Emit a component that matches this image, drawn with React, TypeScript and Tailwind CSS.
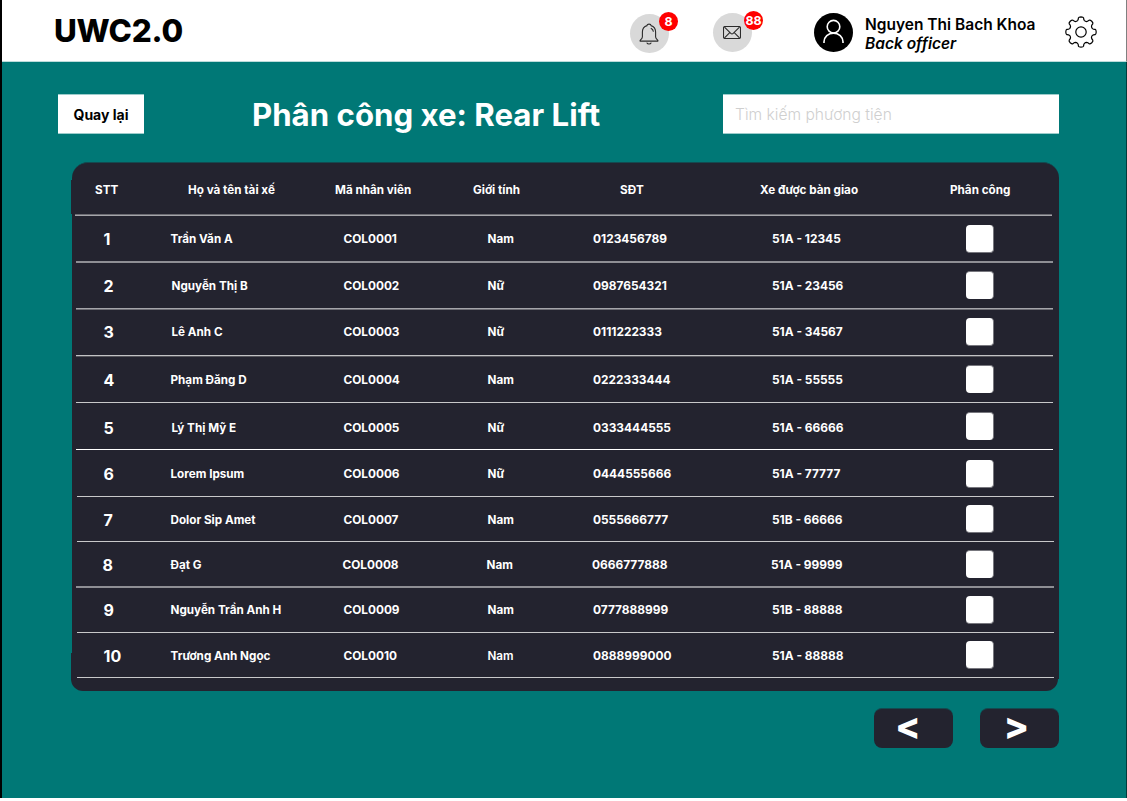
import React from "react";

type Row = {
  no: string; name: string; code: string; gender: string; phone: string; plate: string;
  row: string; line: string;
  text: string; box: string;
  shift?: string; nameShift?: string; genderWeight?: string;
};

const rows: Row[] = [
  { no: "1", name: "Trần Văn A", code: "COL0001", gender: "Nam", phone: "0123456789", plate: "51A - 12345", row: "h-[45px]", line: "mr-[6px] border-t-[#8e8e94] border-b-[#8e8e94]", text: "pt-[14px]", box: "mt-[9px] border-b" },
  { no: "2", name: "Nguyễn Thị B", code: "COL0002", gender: "Nữ", phone: "0987654321", plate: "51A - 23456", row: "h-[45px]", line: "mr-[6px] border-t-[#a5a5aa] border-b-[#6c6c73]", text: "pt-[14px]", box: "mt-[8px] border-t", nameShift: "pl-px" },
  { no: "3", name: "Lê Anh C", code: "COL0003", gender: "Nữ", phone: "0111222333", plate: "51A - 34567", row: "h-[45px]", line: "mr-[6px] border-t-[#c2c2c5] border-b-[#55555c]", text: "pt-[13px]", box: "mt-[8px] border-b", nameShift: "pl-px" },
  { no: "4", name: "Phạm Đăng D", code: "COL0004", gender: "Nam", phone: "0222333444", plate: "51A - 55555", row: "h-[45px]", line: "mr-[6px] border-t-[#c8c8ca] border-b-transparent", text: "pt-[14px]", box: "mt-[8px] border-t" },
  { no: "5", name: "Lý Thị Mỹ E", code: "COL0005", gender: "Nữ", phone: "0333444555", plate: "51A - 66666", row: "h-[45px]", line: "mr-[6px] border-t-white border-b-transparent", text: "pt-[15px]", box: "mt-[8px] border-t", nameShift: "pl-px" },
  { no: "6", name: "Lorem Ipsum", code: "COL0006", gender: "Nữ", phone: "0444555666", plate: "51A - 77777", row: "h-[45px]", line: "ml-px mr-[5px] border-t-[#c8c8ca] border-b-transparent", text: "pt-[14px]", box: "mt-[9px] border-b" },
  { no: "7", name: "Dolor Sip Amet", code: "COL0007", gender: "Nam", phone: "0555666777", plate: "51B - 66666", row: "h-[43px]", line: "ml-px mr-[5px] border-t-[#c8c8ca] border-b-transparent", text: "pt-[13px]", box: "mt-[7px] border-b" },
  { no: "8", name: "Đạt G", code: "COL0008", gender: "Nam", phone: "0666777888", plate: "51A - 99999", row: "h-[43px]", line: "mr-[5px] border-t-[#8e8e94] border-b-[#8e8e94]", text: "pt-[13px]", box: "mt-[7px] border-t", shift: "-ml-px" },
  { no: "9", name: "Nguyễn Trần Anh H", code: "COL0009", gender: "Nam", phone: "0777888999", plate: "51B - 88888", row: "h-[44px]", line: "ml-px mr-[5px] border-t-[#c8c8ca] border-b-transparent", text: "pt-[13px]", box: "mt-[8px] border-b" },
  { no: "10", name: "Trương Anh Ngọc", code: "COL0010", gender: "Nam", phone: "0888999000", plate: "51A - 88888", row: "h-[43px]", line: "ml-px mr-[5px] border-t-[#c8c8ca] border-b-transparent", text: "pt-[13px]", box: "mt-[7px] border-b", genderWeight: "font-semibold" },
];

function Bell() {
  return (
    <svg className="-ml-[1px]" width="20" height="22" viewBox="0 0 20 22" fill="none" stroke="#2b2b2b" strokeWidth="1.100" strokeLinecap="round" strokeLinejoin="round">
      <path d="M8 2.600C8 .6 12 .6 12 2.600c3 .9 4.600 3.200 4.600 6.300v5c0 1.200.5 1.900 2.300 3.400v.8H1.100v-.8c1.800-1.500 2.300-2.200 2.300-3.400v-5C3.400 5.800 5 3.500 8 2.600" />
      <path d="M8 20c.6 1.300 3.400 1.300 4 0M12.200 5.400c1.200.6 1.900 1.500 2.100 2.900" />
    </svg>
  );
}

function Mail() {
  return (
    <svg className="-ml-[1px]" width="18" height="13" viewBox="0 0 18 13" fill="none" stroke="#2b2b2b" strokeWidth="1.100" strokeLinejoin="round">
      <rect x=".5" y=".5" width="17" height="12" rx="1.500" />
      <path d="M1.500 1.200 7.800 7.400c.8.700 1.600.700 2.400 0L16.500 1.200M1.500 11.800l5-5M16.500 11.800l-5-5" />
    </svg>
  );
}

function Gear() {
  const pts: string[] = [];
  const n = 8;
  const polar = (r: number, a: number) => `${(16 + r * Math.cos(a)).toFixed(2)} ${(16 + r * Math.sin(a)).toFixed(2)}`;
  for (let i = 0; i < n; i++) {
    const c = (i * 2 * Math.PI) / n;
    pts.push(`${i ? "L" : "M"}${polar(11.9, c - 0.29)}`);
    pts.push(`Q${polar(12.7, c - 0.2)} ${polar(14.4, c - 0.18)}`);
    pts.push(`Q${polar(15.3, c - 0.15)} ${polar(15.2, c)}`);
    pts.push(`Q${polar(15.3, c + 0.15)} ${polar(14.4, c + 0.18)}`);
    pts.push(`Q${polar(12.7, c + 0.2)} ${polar(11.9, c + 0.29)}`);
    pts.push(`Q${polar(11.4, c + 0.3927)} ${polar(11.9, c + 0.495)}`);
  }
  return (
    <svg width="32" height="32" viewBox="0 0 32 32" fill="none" stroke="#000" strokeWidth="1.200" strokeLinejoin="round">
      <path d={pts.join("") + "Z"} />
      <circle cx="16" cy="16" r="5.200" />
    </svg>
  );
}

function Avatar() {
  return (
    <svg width="39" height="39" viewBox="0 0 39 39" fill="none">
      <circle cx="19.500" cy="19.500" r="19.500" fill="#000" />
      <circle cx="19.500" cy="13.700" r="6.300" stroke="#fff" strokeWidth="1.600" />
      <path d="M10 30v-1.200a9.500 8.700 0 0 1 19 0V30" stroke="#fff" strokeWidth="1.600" />
    </svg>
  );
}

export default function App() {
  return (
    <div className="flex h-[801px] w-[1127px] flex-col overflow-hidden bg-white font-['Inter',sans-serif]">
      <div className="flex h-[798px] flex-col border-l-2 border-black bg-[#007876]">
        <header className="flex h-[62px] shrink-0 border-r border-b border-r-[#808080] border-b-[#bcdcdb] bg-white pl-[52px]">
          <h1 className="w-[576px] pt-[12px] text-[31.4px] leading-[38px] font-extrabold tracking-[-0.2px] whitespace-nowrap text-black">UWC2.0</h1>
          <div className="relative mt-[14px] flex size-[39px] items-center justify-center rounded-full bg-[#d9d9d9]">
            <Bell />
            <span className="absolute -top-[2px] left-[29px] size-[19px] rounded-full bg-[#ff0000] text-center text-[12.4px] leading-[20px] font-bold text-white">8</span>
          </div>
          <div className="relative mt-[13px] ml-[44px] flex size-[39px] items-center justify-center rounded-full bg-[#d9d9d9]">
            <Mail />
            <span className="absolute -top-[2px] left-[31px] flex size-[19px] justify-center rounded-full bg-[#ff0000] text-[12.4px] leading-[20px] font-bold text-white">88</span>
          </div>
          <div className="mt-[13px] ml-[62px]"><Avatar /></div>
          <div className="mt-[15px] ml-[12px] w-[200px] text-[15.5px] leading-[19px] font-semibold whitespace-nowrap text-black">
            <div>Nguyen Thi Bach Khoa</div>
            <div className="italic">Back officer</div>
          </div>
          <div className="mt-[16px]"><Gear /></div>
        </header>

        <main className="grow border-r border-[#003c3b]">
          <div className="flex pt-[32px] pl-[56px]">
            <button className="h-[40px] w-[86px] border-y border-[#9ccccb] bg-white text-[14px] leading-[39px] font-bold text-black">Quay lại</button>
            <h2 className="ml-[108px] w-[471px] pt-px text-[31.2px] leading-[40px] font-bold whitespace-nowrap text-white">Phân công xe: Rear Lift</h2>
            <input className="h-[40px] w-[336px] border-y border-[#9ccccb] bg-white px-[12px] text-[15.6px] font-light outline-none placeholder:text-[#cfcfcf]" placeholder="Tìm kiếm phương tiện" />
          </div>

          <section className="relative mt-[27px] ml-[70px] w-[987px] rounded-t-[16px] border-t border-[#134a50] bg-[#23232f] pl-[4px] text-[11.7px] leading-[18px] font-bold text-white">
            <div className="absolute top-[17px] -left-px h-[34px] w-px bg-[#23232f]" />
            <div className="absolute bottom-0 -left-px h-[26px] w-px bg-[#23232f]" />
            <div className="grid h-[51px] grid-cols-[93px_147px_138px_147px_140px_190px_1fr] pt-[18px] pl-[19px] whitespace-nowrap">
              <span>STT</span>
              <span>Họ và tên tài xế</span>
              <span>Mã nhân viên</span>
              <span>Giới tính</span>
              <span>SĐT</span>
              <span>Xe được bàn giao</span>
              <span>Phân công</span>
            </div>
            <div className="-ml-px mr-[7px] h-[2px] border-y border-t-[#6c6c73] border-b-[#a5a5aa]" />
            {rows.map((r) => (
              <div key={r.no}>
                <div className={`grid grid-cols-[66.5px_173px_144px_105.5px_179px_194px_1fr] pl-[28px] whitespace-nowrap ${r.row}`}>
                  <span className={`-ml-[0.5px] text-[16px] ${r.text}`}><span className={r.shift ?? ""}>{r.no}</span></span>
                  <span className={r.text}><span className={r.nameShift ?? ""}>{r.name}</span></span>
                  <span className={`text-[11.8px] ${r.text} ${r.shift ?? ""}`}>{r.code}</span>
                  <span className={`${r.text} ${r.shift ?? ""} ${r.genderWeight ?? ""}`}>{r.gender}</span>
                  <span className={`text-[11.9px] ${r.text} ${r.shift ?? ""}`}>{r.phone}</span>
                  <span className={`text-[11.9px] ${r.text} ${r.shift ?? ""}`}>{r.plate}</span>
                  <button aria-label={r.name} className={`size-[28px] rounded-[4px] border-r border-[#77777e] bg-white ${r.box}`} />
                </div>
                <div className={`h-[2px] border-y ${r.line}`} />
              </div>
            ))}
          </section>
          <div className="ml-[69px] h-[12px] w-[987px] rounded-b-[16px] bg-[#23232f]" />

          <div className="mt-[17px] ml-[872px] flex gap-[27px] text-[37px] leading-[34px] font-extrabold text-white">
            <button className="h-[40px] w-[79px] rounded-[8px] border-t border-[#134a50] bg-[#23232f] pr-[11px] pb-[5px]">&lt;</button>
            <button className="h-[40px] w-[79px] rounded-[8px] border-t border-[#134a50] bg-[#23232f] pr-[6px] pb-[5px]">&gt;</button>
          </div>
        </main>
      </div>
    </div>
  );
}
